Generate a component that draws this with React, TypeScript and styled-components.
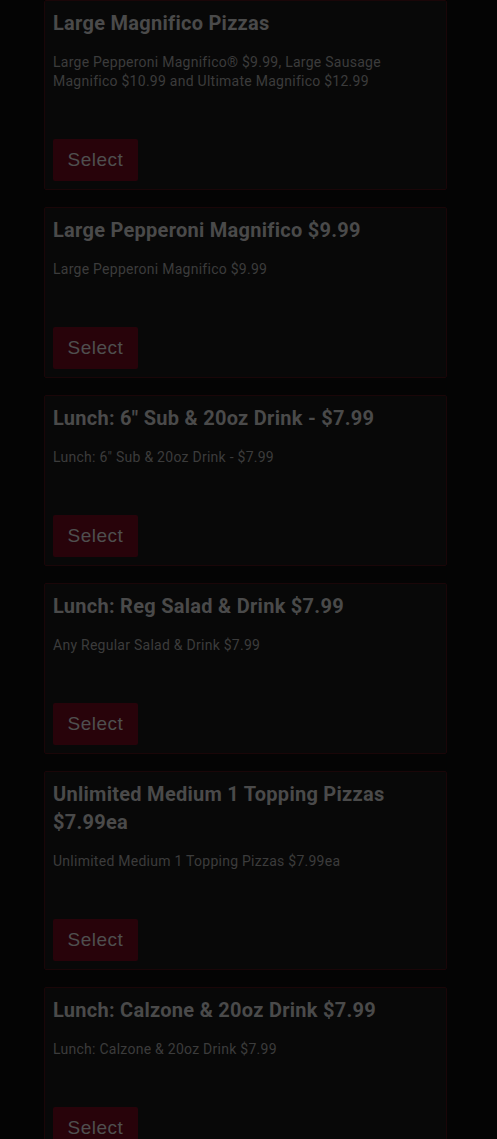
import styled, { createGlobalStyle } from "styled-components";

const GlobalStyle = createGlobalStyle`
  html, body {
    margin: 0;
    padding: 0;
    background: #040404;
  }
  body {
    font-family: Roboto, "Liberation Sans", sans-serif;
    overflow: hidden;
  }
`;

const StyledPage = styled.div`
  height: 1139px;
  overflow: hidden;
  padding: 0 50px 0 44px;
  background: #040404;
`;

const StyledList = styled.div`
  display: flex;
  flex-direction: column;
  gap: 17px;
`;

const StyledCard = styled.div`
  display: flex;
  flex-direction: column;
  padding: 8px;
  background: #080808;
  border: 1px solid #1a0608;
  border-radius: 2px;
`;

const StyledTitle = styled.h3`
  margin: 0;
  font-size: 20px;
  line-height: 28px;
  font-weight: 700;
  color: #4a4a4a;
  letter-spacing: 0.27px;
`;

const StyledDescription = styled.p`
  margin: 16px 0 0;
  font-size: 14px;
  line-height: 19px;
  color: #3c3c3c;
  letter-spacing: 0.26px;
`;

const StyledSelectButton = styled.button`
  align-self: flex-start;
  margin-top: 48px;
  width: 85px;
  height: 42px;
  padding: 0;
  border: none;
  border-radius: 2px;
  background: #28030a;
  color: #4f4f4f;
  font-family: "Liberation Sans", Arial, sans-serif;
  font-size: 19px;
  letter-spacing: 0.5px;
  cursor: pointer;
`;

const deals = [
  {
    title: "Large Magnifico Pizzas",
    description:
      "Large Pepperoni Magnifico® $9.99, Large Sausage Magnifico $10.99 and Ultimate Magnifico $12.99",
  },
  {
    title: "Large Pepperoni Magnifico $9.99",
    description: "Large Pepperoni Magnifico $9.99",
  },
  {
    title: 'Lunch: 6" Sub & 20oz Drink - $7.99',
    description: 'Lunch: 6" Sub & 20oz Drink - $7.99',
  },
  {
    title: "Lunch: Reg Salad & Drink $7.99",
    description: "Any Regular Salad & Drink $7.99",
  },
  {
    title: "Unlimited Medium 1 Topping Pizzas $7.99ea",
    description: "Unlimited Medium 1 Topping Pizzas $7.99ea",
  },
  {
    title: "Lunch: Calzone & 20oz Drink $7.99",
    description: "Lunch: Calzone & 20oz Drink $7.99",
  },
];

export default function App() {
  return (
    <>
      <GlobalStyle />
      <StyledPage>
        <StyledList>
          {deals.map((deal) => (
            <StyledCard key={deal.title}>
              <StyledTitle>{deal.title}</StyledTitle>
              <StyledDescription>{deal.description}</StyledDescription>
              <StyledSelectButton>Select</StyledSelectButton>
            </StyledCard>
          ))}
        </StyledList>
      </StyledPage>
    </>
  );
}
